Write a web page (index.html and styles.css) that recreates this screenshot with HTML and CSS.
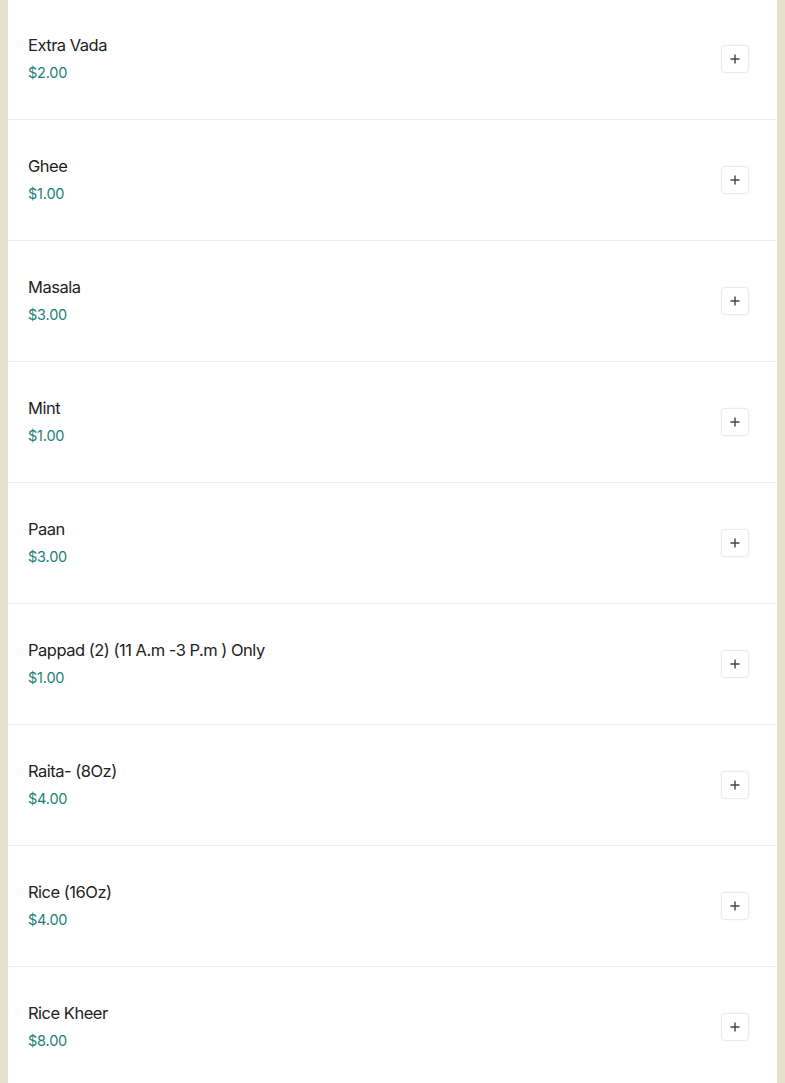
FILE: index.html
```html
<!DOCTYPE html>
<html>
<head>
  <link rel="stylesheet" href="styles.css">
</head>
<body>
<div class="panel">
  <ul class="list">
    <li class="item">
      <div class="info"><div class="name">Extra Vada</div><div class="price">$2.00</div></div>
      <button class="add"><svg viewBox="0 0 10 10"><path d="M5 0.5v9M0.5 5h9"/></svg></button>
    </li>
    <li class="item">
      <div class="info"><div class="name">Ghee</div><div class="price">$1.00</div></div>
      <button class="add"><svg viewBox="0 0 10 10"><path d="M5 0.5v9M0.5 5h9"/></svg></button>
    </li>
    <li class="item">
      <div class="info"><div class="name">Masala</div><div class="price">$3.00</div></div>
      <button class="add"><svg viewBox="0 0 10 10"><path d="M5 0.5v9M0.5 5h9"/></svg></button>
    </li>
    <li class="item">
      <div class="info"><div class="name">Mint</div><div class="price">$1.00</div></div>
      <button class="add"><svg viewBox="0 0 10 10"><path d="M5 0.5v9M0.5 5h9"/></svg></button>
    </li>
    <li class="item">
      <div class="info"><div class="name">Paan</div><div class="price">$3.00</div></div>
      <button class="add"><svg viewBox="0 0 10 10"><path d="M5 0.5v9M0.5 5h9"/></svg></button>
    </li>
    <li class="item">
      <div class="info"><div class="name">Pappad (2) (11 A.m -3 P.m ) Only</div><div class="price">$1.00</div></div>
      <button class="add"><svg viewBox="0 0 10 10"><path d="M5 0.5v9M0.5 5h9"/></svg></button>
    </li>
    <li class="item">
      <div class="info"><div class="name">Raita- (8Oz)</div><div class="price">$4.00</div></div>
      <button class="add"><svg viewBox="0 0 10 10"><path d="M5 0.5v9M0.5 5h9"/></svg></button>
    </li>
    <li class="item">
      <div class="info"><div class="name">Rice (16Oz)</div><div class="price">$4.00</div></div>
      <button class="add"><svg viewBox="0 0 10 10"><path d="M5 0.5v9M0.5 5h9"/></svg></button>
    </li>
    <li class="item">
      <div class="info"><div class="name">Rice Kheer</div><div class="price">$8.00</div></div>
      <button class="add"><svg viewBox="0 0 10 10"><path d="M5 0.5v9M0.5 5h9"/></svg></button>
    </li>
  </ul>
</div>
</body>
</html>
```

FILE: styles.css
```css
html, body {
  margin: 0;
  padding: 0;
  background-color: #e7e0cd;
}
body {
  padding: 0 8px;
  font-family: Inter, "Noto Sans", sans-serif;
}
.panel {
  background-color: #fff;
  min-height: 1083px;
}
.list {
  list-style: none;
  margin: -1px 0 0 0;
  padding: 0;
}
.item {
  box-sizing: border-box;
  border-bottom: 1px solid #ececec;
  height: 121px;
  display: flex;
  align-items: center;
  justify-content: space-between;
  padding: 0 28px 0 20px;
}
.info {
  margin-bottom: 1px;
}
.name {
  font-size: 16.5px;
  color: #222;
  letter-spacing: -0.5px;
  line-height: 20px;
}
.price {
  margin-top: 9px;
  font-size: 14.5px;
  color: #1a8273;
  letter-spacing: -0.2px;
  line-height: 18px;
}
.add {
  width: 28px;
  height: 28px;
  padding: 0;
  border: 1px solid #ebebeb;
  border-radius: 4px;
  background-color: #fff;
  box-shadow: 0 0 3px rgba(0, 0, 0, 0.05);
  display: flex;
  align-items: center;
  justify-content: center;
}
.add svg {
  width: 10px;
  height: 10px;
  stroke: #444;
  stroke-width: 1.4;
  fill: none;
}
```
